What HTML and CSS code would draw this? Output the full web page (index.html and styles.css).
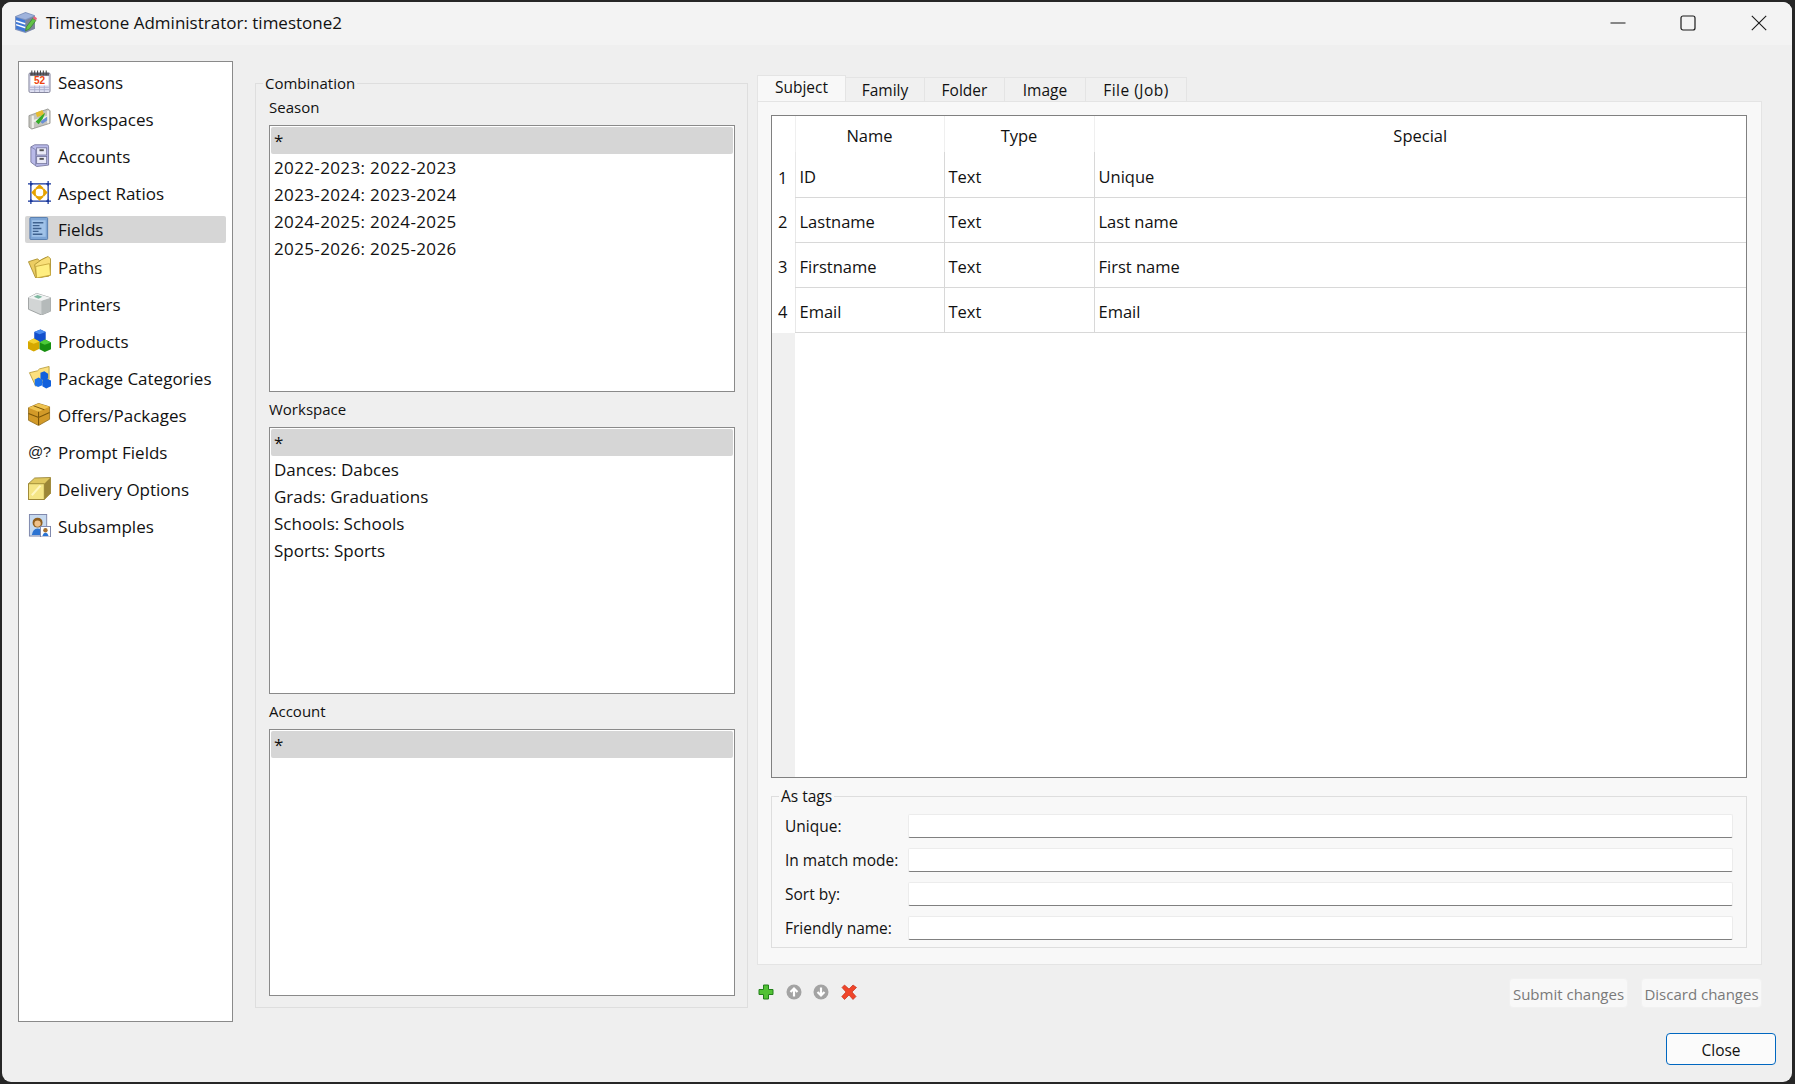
FILE: index.html
```html
<!DOCTYPE html>
<html lang="en">
<head>
<meta charset="utf-8">
<title>Timestone Administrator: timestone2</title>
<link rel="stylesheet" href="styles.css">
</head>
<body>
<div class="window">
  <header class="titlebar">
    <svg class="app-icon" viewBox="0 0 22 22">
      <path d="M1 5 L11 1 L20 4 L20 17 L11 21 L1 18Z" fill="#7f93bd"/>
      <path d="M2 6 L11 9 L11 20 L2 17Z" fill="#3f78d6"/>
      <path d="M2 9.500 L11 12.500 M2 13 L11 16" stroke="#fff" stroke-width="1.400"/>
      <path d="M11 9 L20 5 L20 17 L11 20Z" fill="#7d8499"/>
      <path d="M2 5.500 L11 2 L19 4.500 L11 8Z" fill="#9fb3dc"/>
      <path d="M11 19 L12 15 L18 7 L21 9 L15 17Z" fill="#62c246" stroke="#2f7d22" stroke-width=".6"/>
      <path d="M18 7 L19.500 5 L22 7 L21 9Z" fill="#e8657c"/>
    </svg>
    <span class="app-title">Timestone Administrator: timestone2</span>
    <div class="controls">
      <svg class="ctl" viewBox="0 0 16 16"><path d="M.5 8 H15.500" stroke="#1a1a1a" stroke-width="1.100" fill="none"/></svg>
      <svg class="ctl" viewBox="0 0 16 16"><rect x="1" y="1" width="14" height="14" rx="2" stroke="#1a1a1a" stroke-width="1.200" fill="none"/></svg>
      <svg class="ctl" viewBox="0 0 16 16"><path d="M.8 .8 L15.200 15.200 M15.200 .8 L.8 15.200" stroke="#1a1a1a" stroke-width="1.100" fill="none"/></svg>
    </div>
  </header>

  <div class="content">
    <div class="panels">
      <nav class="sidebar">
        <div class="nav-item">
          <svg class="ni" viewBox="0 0 24 24"><rect x="1" y="3" width="22" height="20.500" rx="1.500" fill="#dfe0f2" stroke="#7f8199"/><path d="M2 18h20M2 20.500h20M7 16v7M12 16v7M17 16v7" stroke="#a9abcb" stroke-width=".9"/><rect x="2" y="3" width="20" height="3" fill="#5e5e68"/><path d="M4 .5v5M7 .5v5M10 .5v5M13 .5v5M16 .5v5M19 .5v5" stroke="#444" stroke-width="1.100"/><rect x="3" y="6.500" width="18" height="9.500" fill="#fff"/><text class="cal" x="12" y="15">52</text></svg>
          <span>Seasons</span>
        </div>
        <div class="nav-item">
          <svg class="ni" viewBox="0 0 24 24"><path d="M1 9 L21 2 L23 4 V17 L4 23 L1 21Z" fill="#c4c4be" stroke="#8a8a85" stroke-width=".8"/><path d="M5 9v13M21 4v13M5 15 L21 10" stroke="#f0f0ec" stroke-width="2.200"/><path d="M8 6 L15 3 L17 8 L9.500 10.500Z" fill="#e5bc30"/><path d="M8 15 L14 9 L18 6 L15.500 12 L11 18Z" fill="#34ac28"/><path d="M13 15.500 L20 10 V14 L15 17.500Z" fill="#6a8fd6"/></svg>
          <span>Workspaces</span>
        </div>
        <div class="nav-item">
          <svg class="ni" viewBox="0 0 24 24"><path d="M3 3 L7 .8 H20 Q21.500 .8 21.500 3 V22 L9 23.500 L3 19Z" fill="#b8b9e8" stroke="#74759c" stroke-width=".9"/><path d="M3 3 L8 6 V23" fill="none" stroke="#8081ad" stroke-width=".9"/><rect x="9" y="4" width="10.500" height="7.500" fill="#eaeaf8" stroke="#74759c" stroke-width=".9"/><rect x="9" y="13" width="10.500" height="7.500" fill="#eaeaf8" stroke="#74759c" stroke-width=".9"/><rect x="12" y="5.500" width="4.500" height="2" fill="#555"/><rect x="12" y="14.500" width="4.500" height="2" fill="#555"/></svg>
          <span>Accounts</span>
        </div>
        <div class="nav-item">
          <svg class="ni" viewBox="0 0 24 24"><rect x="3" y="3" width="18" height="18" fill="#fff" stroke="#12329a" stroke-width="1.300"/><path d="M0 3h5M19 3h5M0 21h5M19 21h5M3 0v5M3 19v5M21 0v5M21 19v5" stroke="#12329a" stroke-width="1.300"/><path d="M12 3.500 L16.500 7.500 H7.500Z M12 20.500 L16.500 16.500 H7.500Z M3.500 12 L7.500 7.500 V16.500Z M20.500 12 L16.500 7.500 V16.500Z" fill="#e6a300"/><rect x="7.500" y="7.500" width="9" height="9" rx="3.500" fill="#fff" stroke="#e6a300" stroke-width="1.300"/></svg>
          <span>Aspect Ratios</span>
        </div>
        <div class="nav-item selected">
          <svg class="ni" viewBox="0 0 24 24"><rect x="2" y=".5" width="18.500" height="23" rx="1" fill="#7ea6d6" stroke="#4d76aa" stroke-width=".9"/><path d="M4 3.500h14.500v17H4z" fill="#a0c2e8"/><path d="M5 6h11M5 9h7M5 12h9M5 15h6M5 18h10" stroke="#3f628f" stroke-width="1.400"/></svg>
          <span>Fields</span>
        </div>
        <div class="nav-item">
          <svg class="ni" viewBox="0 0 24 24"><path d="M.5 7 L10 4 L12 6 L19 2.500 L23 10 L22 22 L8 24 Z" fill="#eccd62" stroke="#a88d2c" stroke-width=".9"/><path d="M7 10 L14 5 L21 1.500 L23.500 4 L23.500 21 L9 24Z" fill="#f9df78" stroke="#a88d2c" stroke-width=".9"/><path d="M8 12 L22.500 9 L23.500 21 L9 24Z" fill="#ffee80" stroke="#c4a43a" stroke-width=".9"/></svg>
          <span>Paths</span>
        </div>
        <div class="nav-item">
          <svg class="ni" viewBox="0 0 24 24"><path d="M.5 6 L9 1.500 L23.500 6 L23.500 20 L14 24 L.5 18Z" fill="#d2d5d5" stroke="#8a9090" stroke-width=".8"/><path d="M14 9 L23.500 6 V20 L14 24Z" fill="#b5baba"/><path d="M.5 6 L9 1.500 L23.500 6 L14 9Z" fill="#f2f4f4"/><path d="M6 5 L10 3 L15 5 L11 7Z" fill="#7fb8a0"/></svg>
          <span>Printers</span>
        </div>
        <div class="nav-item">
          <svg class="ni" viewBox="0 0 24 24"><path d="M6.500 3 L13 .5 L18.500 3 V11 L12 14 L6.500 11Z" fill="#1450cc"/><path d="M6.500 3 L12 5.500 L18.500 3 L13 .5Z" fill="#4a8cf0"/><path d="M0 13 L6 10 L12 13 V20.500 L6 23.500 L0 20.500Z" fill="#d6a800"/><path d="M0 13 L6 15.500 L12 13 L6 10Z" fill="#f4d430"/><path d="M12 14 L18 11 L24 14 V21 L17.500 24 L12 21Z" fill="#178f10"/><path d="M12 14 L17.500 16.500 L24 14 L18 11Z" fill="#4ccb38"/></svg>
          <span>Products</span>
        </div>
        <div class="nav-item">
          <svg class="ni" viewBox="0 0 24 24"><path d="M1.500 7 L10 5 L12 3 L22 .5 L22 14 L8 21Z" fill="#fbe07e" stroke="#b89b3a" stroke-width=".9"/><path d="M13 7 L17 5.500 L21 8 V13 L16 15 L13 13Z" fill="#1260dc"/><path d="M7 14 L11 12 L15 14 V20 L10.500 22 L7 20Z" fill="#1a70ea"/><path d="M15 15 L19 13 L24 15 V21 L19 23.500 L15 21Z" fill="#1260dc"/></svg>
          <span>Package Categories</span>
        </div>
        <div class="nav-item">
          <svg class="ni" viewBox="0 0 24 24"><path d="M.5 5 L11 .5 L22.500 4 V17 L11 23.500 L.5 18Z" fill="#d39a28" stroke="#8a6614" stroke-width=".8"/><path d="M.5 5 L11 9 L22.500 4 L11 .5Z" fill="#efc350"/><path d="M11 9V23M.5 11 L11 15 L22.500 10M6 3 L17 7" stroke="#7a5508" stroke-width="1.100" fill="none"/></svg>
          <span>Offers/Packages</span>
        </div>
        <div class="nav-item">
          <span class="at-icon">@?</span>
          <span>Prompt Fields</span>
        </div>
        <div class="nav-item">
          <svg class="ni" viewBox="0 0 24 24"><path d="M.5 7 L7 1 L23.500 .5 V17 L17 23.500 L.5 23.500Z" fill="#e0c860" stroke="#8e7a28" stroke-width=".8"/><path d="M.5 7 H17 V23.500 H.5Z" fill="#f5e585" stroke="#8e7a28" stroke-width=".8"/><path d="M17 7 L23.500 .5 V17 L17 23.500Z" fill="#9c8636"/><path d="M4 19 L13 9" stroke="#fff6c0" stroke-width="2.200"/></svg>
          <span>Delivery Options</span>
        </div>
        <div class="nav-item">
          <svg class="ni" viewBox="0 0 24 24"><rect x="1.500" y=".5" width="18" height="22.500" fill="#c6d9ef" stroke="#7c85aa"/><circle cx="10" cy="9" r="5.200" fill="#8f5e1e"/><circle cx="10" cy="10" r="3.300" fill="#efc18a"/><path d="M4 22 Q5 15 10 15 Q15 15 16 22Z" fill="#2c74d2"/><rect x="13" y="13" width="10.500" height="11" fill="#fff" stroke="#7c85aa"/><circle cx="18.200" cy="17" r="2.300" fill="#a8702c"/><path d="M15 23 Q16 19.500 18.200 19.500 Q20.500 19.500 21.500 23Z" fill="#2c74d2"/></svg>
          <span>Subsamples</span>
        </div>
      </nav>

      <fieldset class="combination">
        <legend class="legend">Combination</legend>
        <div class="list-label">Season</div>
        <ul class="listbox">
          <li class="sel">*</li>
          <li class="year">2022-2023: 2022-2023</li>
          <li class="year">2023-2024: 2023-2024</li>
          <li class="year">2024-2025: 2024-2025</li>
          <li class="year">2025-2026: 2025-2026</li>
        </ul>
        <div class="list-label">Workspace</div>
        <ul class="listbox">
          <li class="sel">*</li>
          <li>Dances: Dabces</li>
          <li>Grads: Graduations</li>
          <li>Schools: Schools</li>
          <li>Sports: Sports</li>
        </ul>
        <div class="list-label">Account</div>
        <ul class="listbox">
          <li class="sel">*</li>
        </ul>
      </fieldset>

      <section class="editor">
        <div class="tabs">
          <div class="tab active">Subject</div>
          <div class="tab">Family</div>
          <div class="tab">Folder</div>
          <div class="tab">Image</div>
          <div class="tab wide">File (Job)</div>
        </div>
        <div class="pane">
          <div class="grid-wrap">
            <table class="grid">
              <colgroup><col class="c0"><col class="c1"><col class="c2"><col></colgroup>
              <thead>
                <tr><th></th><th>Name</th><th>Type</th><th>Special</th></tr>
              </thead>
              <tbody>
                <tr><th>1</th><td>ID</td><td>Text</td><td>Unique</td></tr>
                <tr><th>2</th><td>Lastname</td><td>Text</td><td>Last name</td></tr>
                <tr><th>3</th><td>Firstname</td><td>Text</td><td>First name</td></tr>
                <tr><th>4</th><td>Email</td><td>Text</td><td>Email</td></tr>
              </tbody>
            </table>
            <div class="grid-strip"></div>
          </div>
          <fieldset class="tags">
            <legend class="legend">As tags</legend>
            <label class="tag-row"><span>Unique:</span><input type="text"></label>
            <label class="tag-row"><span>In match mode:</span><input type="text"></label>
            <label class="tag-row"><span>Sort by:</span><input type="text"></label>
            <label class="tag-row"><span>Friendly name:</span><input type="text"></label>
          </fieldset>
        </div>
        <div class="actions">
          <svg class="act" viewBox="0 0 16 16"><path d="M5.500 1 H10.500 V5.500 H15 V10.500 H10.500 V15 H5.500 V10.500 H1 V5.500 H5.500Z" fill="#52c235" stroke="#23801a" stroke-width="1"/></svg>
          <svg class="act" viewBox="0 0 16 16"><circle cx="8" cy="8" r="7.500" fill="#a3a3a3"/><path d="M8 12.500 V4.500 M4.500 8 L8 4.500 L11.500 8" stroke="#fff" stroke-width="2.200" fill="none"/></svg>
          <svg class="act" viewBox="0 0 16 16"><circle cx="8" cy="8" r="7.500" fill="#a3a3a3"/><path d="M8 3.500 V11.500 M4.500 8 L8 11.500 L11.500 8" stroke="#fff" stroke-width="2.200" fill="none"/></svg>
          <svg class="act" viewBox="0 0 16 16"><path d="M3.500 1 L8 5 L12 1 L15.500 3.500 L11 8 L15 12.500 L12 15.500 L8 11 L3.500 15.500 L.8 12.500 L5 8 L1 3.500Z" fill="#f0452a" stroke="#c4301a" stroke-width=".7"/></svg>
          <div class="spacer"></div>
          <button class="btn-disabled">Submit changes</button>
          <button class="btn-disabled">Discard changes</button>
        </div>
      </section>
    </div>
    <div class="footer">
      <button class="btn-close">Close</button>
    </div>
  </div>
</div>
</body>
</html>
```
FILE: styles.css
```css
* { box-sizing: border-box; }
html, body { height: 100%; margin: 0; }
body {
  background: #262626;
  padding: 2px 3px 2px 2px;
  overflow: hidden;
  font-family: "Open Sans", "Noto Sans", sans-serif;
  font-size: 17px;
  color: #111;
}
.window {
  height: 1080px;
  background: #efefef;
  border-radius: 9px;
  overflow: hidden;
  display: flex;
  flex-direction: column;
}
.titlebar {
  height: 43px;
  flex: none;
  background: #f3f3f3;
  display: flex;
  align-items: center;
  padding-left: 12px;
}
.app-icon { width: 23px; height: 23px; margin-right: 9px; margin-top: -3px; }
.app-title { font-size: 17px; margin-top: -3px; }
.controls {
  margin-left: auto;
  display: flex;
  gap: 55px;
  padding-right: 25px;
  margin-top: -1px;
}
.ctl { width: 16px; height: 16px; display: block; }
.ctl:first-child { margin-right: -1px; }

.content { flex: 1; display: flex; flex-direction: column; padding: 16px 16px 0; }
.panels { display: flex; align-items: flex-start; height: 961px; }

.sidebar {
  width: 215px;
  height: 961px;
  flex: none;
  background: #fff;
  border: 1px solid #8a8a8a;
  padding: 2px 6px;
}
.nav-item {
  height: 37px;
  display: flex;
  align-items: center;
  border-radius: 2px;
  padding-left: 3px;
}
.nav-item span:last-child { margin-left: 7px; }
.nav-item.selected {
  background: #d6d6d6;
  height: 27px;
  margin: 4px 0 6px;
}
.ni { width: 23px; height: 23px; flex: none; margin-top: -3px; }
.cal { font: bold 10.500px "Liberation Sans", sans-serif; fill: #ee4410; text-anchor: middle; }
.at-icon { width: 23px; font-size: 15px; font-family: "Liberation Sans", sans-serif; flex: none; margin-top: -3px; color: #222; letter-spacing: -.5px; }

.combination {
  width: 493px;
  height: 936px;
  flex: none;
  margin: 11px 0 0 22px;
  padding: 2px 12px 10px 13px;
  border: 1px solid #dedede;
  min-width: 0;
}
.legend { padding: 0 2px; margin-left: -6px; line-height: 22px; font-size: 15px; }
.list-label { line-height: 22px; font-size: 15px; }
.listbox {
  list-style: none;
  margin: 7px 0 6px;
  padding: 1px;
  height: 267px;
  background: #fff;
  border: 1px solid #8a8a8a;
}
.listbox:last-child { margin-bottom: 0; }
.listbox li { height: 27px; line-height: 27px; padding-left: 3px; }
.listbox .sel { background: #d6d6d6; border-radius: 2px; }
.listbox .year { letter-spacing: .36px; }

.editor { width: 1005px; flex: none; margin: 14px 0 0 9px; }
.tabs {
  display: grid;
  grid-template-columns: 88px 79px 80px 81px 101px;
  align-items: end;
  justify-content: start;
  height: 26px;
}
.tab {
  height: 24px;
  line-height: 24px;
  text-align: center;
  background: #f0f0f0;
  border: 1px solid #e4e4e4;
  border-bottom: none;
  margin-right: -1px;
  font-size: 15.500px;
}
.tab.active { height: 26px; line-height: 22px; background: #f8f8f8; }
.tab.wide { letter-spacing: .5px; }
.pane {
  height: 864px;
  padding: 13px 14px 16px 13px;
  background: #f8f8f8;
  border: 1px solid #e4e4e4;
  display: flex;
  flex-direction: column;
}
.grid-wrap {
  height: 663px;
  flex: none;
  background: #fff;
  border: 1px solid #808080;
  display: flex;
  flex-direction: column;
}
.grid { border-collapse: collapse; table-layout: fixed; width: 100%; font-size: 16.500px; }
.c0 { width: 23px; }
.c1 { width: 149px; }
.c2 { width: 150px; }
.grid thead th { height: 36px; font-weight: 400; border-left: 1px solid #efefef; padding-top: 3px; }
.grid thead th:first-child { border-left: none; }
.grid tbody tr { height: 45px; }
.grid tbody th { font-weight: 400; padding: 3px 1px 0 0; }
.grid tbody td {
  border-left: 1px solid #d8d8d8;
  border-bottom: 1px solid #d8d8d8;
  padding: 3px 3px 0 4px;
}
.grid tbody tr:first-child td, .grid tbody tr:first-child th { padding-top: 5px; }
.grid tbody td:first-of-type { border-left: 1px solid #e8e8e8; }
.grid-strip { flex: 1; width: 23px; background: #f0f0f0; }

.tags {
  margin: 7px 0 0;
  padding: 7px 13px 0 13px;
  height: 163px;
  flex: none;
  border: 1px solid #dedede;
  min-width: 0;
}
.tags .legend { font-size: 15.500px; }
.tag-row { display: flex; align-items: center; height: 24px; margin-bottom: 10px; font-size: 15.500px; }
.tag-row span { width: 123px; flex: none; }
.tag-row input {
  flex: 1;
  height: 24px;
  min-width: 0;
  background: #fff;
  border: 1px solid #ececec;
  border-bottom: 1px solid #808080;
  border-radius: 2px;
  outline: none;
}

.actions { display: flex; align-items: center; height: 30px; margin-top: 13px; }
.act { width: 16px; height: 16px; margin-right: 11.500px; margin-top: -2px; }
.act:first-child { margin-left: 1px; }
.spacer { flex: 1; }
.btn-disabled {
  height: 30px;
  padding: 2px 0 0;
  width: 119px;
  margin-left: 13px;
  font: inherit;
  font-size: 15px;
  color: #7a7a7a;
  background: #f8f8f8;
  border: 1px solid #f1f1f1;
  border-radius: 4px;
}
.btn-disabled:last-child { width: 121px; }
.footer { display: flex; justify-content: flex-end; padding-top: 11px; }
.btn-close {
  width: 110px;
  height: 32px;
  padding: 2px 0 0;
  font: inherit;
  font-size: 15.500px;
  background: #fbfbfb;
  border: 1px solid #0067c0;
  border-radius: 4px;
  color: #111;
}
```
